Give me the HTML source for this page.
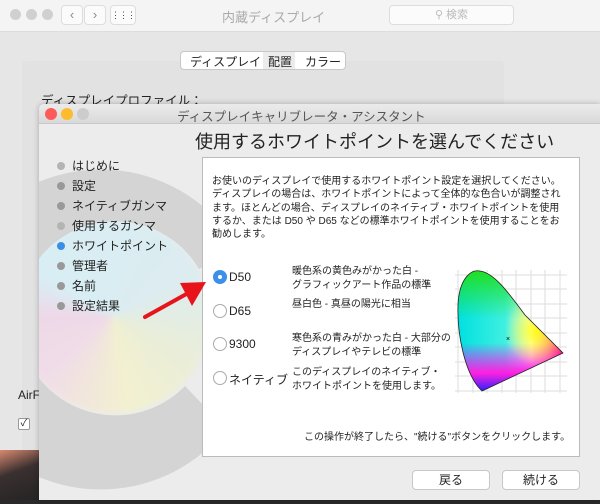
<!DOCTYPE html>
<html><head><meta charset="utf-8"><style>
*{margin:0;padding:0;box-sizing:border-box}
body{width:600px;height:504px;overflow:hidden;position:relative;background:#e6e6e6;font-family:"Liberation Sans","Noto Sans CJK JP",sans-serif;color:#222}
.abs{position:absolute}
.tb{left:0;top:0;width:600px;height:32px;background:#f4f4f4;border-bottom:1px solid #ddd}
.dot{width:11px;height:11px;border-radius:50%;background:#d0d0d0;top:9px}
.btn{background:#fbfbfb;border:1px solid #ddd;border-radius:4px}
.t{font-size:12px;white-space:nowrap}
.side div{position:relative;padding-left:15px}
.side i{position:absolute;left:0;top:6px;width:8px;height:8px;border-radius:50%;background:#999}
</style></head><body>
<div class="abs tb"></div>
<div class="abs dot" style="left:10px"></div><div class="abs dot" style="left:26px"></div><div class="abs dot" style="left:42px"></div>
<div class="abs btn" style="left:61px;top:5px;width:22px;height:20px;font-size:13px;color:#888;text-align:center;line-height:18px">&#8249;</div>
<div class="abs btn" style="left:84px;top:5px;width:22px;height:20px;font-size:13px;color:#888;text-align:center;line-height:18px">&#8250;</div>
<div class="abs btn" style="left:110px;top:5px;width:26px;height:20px;font-size:9px;color:#444;text-align:center;line-height:18px;letter-spacing:-1px">&#8942;&#8942;&#8942;</div>
<div class="abs t" style="left:222px;top:7px;font-size:13px;color:#aaa">内蔵ディスプレイ</div>
<div class="abs btn" style="left:389px;top:5px;width:125px;height:20px;font-size:11px;color:#bbb;text-align:center;line-height:18px">&#9906; 検索</div>
<div class="abs" style="left:22px;top:61px;width:482px;height:400px;background:#e2e2e2;border-radius:4px"></div>
<div class="abs" style="left:180px;top:51px;width:166px;height:19px;background:#fff;border:1px solid #c8c8c8;border-radius:4px"></div>
<div class="abs" style="left:263px;top:52px;width:32px;height:17px;background:#ececec"></div>
<div class="abs t" style="left:190px;top:53px">ディスプレイ</div>
<div class="abs t" style="left:268px;top:53px">配置</div>
<div class="abs t" style="left:305px;top:53px">カラー</div>
<div class="abs t" style="left:41px;top:90px;font-size:12.5px">ディスプレイプロファイル：</div>
<div class="abs t" style="left:18px;top:388px">AirF</div>
<div class="abs" style="left:18px;top:418px;width:12px;height:12px;border:1px solid #999;background:#fff;border-radius:2px;font-size:10px;line-height:10px;text-align:center">✓</div>
<div class="abs" style="left:0;top:450px;width:40px;height:54px;background:linear-gradient(160deg,#d98a70,#3a3030 40%,#222)"></div>
<div class="abs" style="left:0;top:500px;width:600px;height:4px;background:#2a2a2a"></div>
<!-- dialog -->
<div class="abs" style="left:39px;top:104px;width:561px;height:396px;background:#ececec;border-radius:5px 0 0 0;box-shadow:0 0 6px rgba(0,0,0,.25);overflow:hidden">
 <div class="abs" style="left:0;top:0;width:561px;height:20px;background:linear-gradient(#ebebeb,#d9d9d9);border-bottom:1px solid #c8c8c8"></div>
 <div class="abs" style="left:6px;top:4px;width:12px;height:12px;border-radius:50%;background:#fc5b57"></div>
 <div class="abs" style="left:22px;top:4px;width:12px;height:12px;border-radius:50%;background:#fdbc2e"></div>
 <div class="abs" style="left:38px;top:4px;width:12px;height:12px;border-radius:50%;background:#ccc"></div>
 <div class="abs t" style="left:138px;top:2px;font-size:12.5px;color:#555">ディスプレイキャリブレータ・アシスタント</div>
 <div class="abs" style="left:-23px;top:115px;width:194px;height:194px;border-radius:50%;background:conic-gradient(from -60deg,#d8eef4 0deg,#dcecf0 120deg,#eaeed8 180deg,#f2f0d0 230deg,#f0dce8 290deg,#eed8e8 330deg,#d8eef4 360deg);filter:blur(3px)"></div>
 <svg class="abs" style="left:0;top:0" width="561" height="396">
  <path d="M200 145 A160 160 0 1 0 187 325 L146 282 A97 97 0 1 1 160 165 Z" fill="#d2d2d2" opacity="0.9"/>
 </svg>
 <div class="abs" style="left:156px;top:24px;font-size:18px;white-space:nowrap">使用するホワイトポイントを選んでください</div>
 <div class="abs" style="left:163px;top:53px;width:378px;height:300px;background:#fff;border:1px solid #bbb"></div>
</div>
<div class="abs side" style="left:57px;top:156px;font-size:12px;line-height:20px">
 <div><i style="background:#b4b4b4"></i>はじめに</div><div><i></i>設定</div><div><i></i>ネイティブガンマ</div><div><i style="background:#b4b4b4"></i>使用するガンマ</div><div><i style="background:#3a8ee6"></i>ホワイトポイント</div><div><i></i>管理者</div><div><i></i>名前</div><div><i></i>設定結果</div>
</div>
<div class="abs" style="left:212px;top:175px;font-size:10px;line-height:13.3px;color:#222;white-space:nowrap">お使いのディスプレイで使用するホワイトポイント設定を選択してください。<br>ディスプレイの場合は、ホワイトポイントによって全体的な色合いが調整され<br>ます。ほとんどの場合、ディスプレイのネイティブ・ホワイトポイントを使用<br>するか、または D50 や D65 などの標準ホワイトポイントを使用することをお<br>勧めします。</div>
<div class="abs" style="left:213px;top:270px;width:14px;height:14px;border-radius:50%;background:#3d8fea"><div style="margin:5px;width:4px;height:4px;border-radius:50%;background:#fff"></div></div>
<div class="abs" style="left:213px;top:304px;width:14px;height:14px;border-radius:50%;border:1px solid #aaa;background:#fff"></div>
<div class="abs" style="left:213px;top:337px;width:14px;height:14px;border-radius:50%;border:1px solid #aaa;background:#fff"></div>
<div class="abs" style="left:213px;top:371px;width:14px;height:14px;border-radius:50%;border:1px solid #aaa;background:#fff"></div>
<div class="abs t" style="left:229px;top:270px">D50</div>
<div class="abs t" style="left:229px;top:304px">D65</div>
<div class="abs t" style="left:229px;top:337px">9300</div>
<div class="abs t" style="left:229px;top:371px">ネイティブ</div>
<div class="abs" style="left:292px;top:265px;font-size:10px;line-height:14px;white-space:nowrap">暖色系の黄色みがかった白 -<br>グラフィックアート作品の標準</div>
<div class="abs" style="left:292px;top:298px;font-size:10px;line-height:14px;white-space:nowrap">昼白色 - 真昼の陽光に相当</div>
<div class="abs" style="left:292px;top:332px;font-size:10px;line-height:14px;white-space:nowrap">寒色系の青みがかった白 - 大部分の<br>ディスプレイやテレビの標準</div>
<div class="abs" style="left:292px;top:366px;font-size:10px;line-height:14px;white-space:nowrap">このディスプレイのネイティブ・<br>ホワイトポイントを使用します。</div>
<svg class="abs" style="left:455px;top:265px" width="115" height="130">
 <g stroke="#ddd" stroke-width="1">
  <path d="M3 5V128M18 5V128M32 5V128M47 5V128M61 5V128M76 5V128M90 5V128M105 5V128"/>
  <path d="M0 10H112M0 24H112M0 39H112M0 53H112M0 68H112M0 82H112M0 97H112M0 111H112M0 126H112"/>
 </g>
 <defs>
  <linearGradient id="g1" x1="0" y1="0" x2="1" y2="0"><stop offset="0" stop-color="#00e0e0"/><stop offset=".45" stop-color="#40f0e0"/><stop offset=".7" stop-color="#fff"/><stop offset="1" stop-color="#ff1060"/></linearGradient>
  <linearGradient id="g2" x1="0" y1="0" x2="0" y2="1"><stop offset="0" stop-color="#20e020"/><stop offset=".4" stop-color="#20e020" stop-opacity="0"/></linearGradient>
  <linearGradient id="g3" x1="0" y1="0" x2="0" y2="1"><stop offset=".6" stop-color="#ff00ff" stop-opacity="0"/><stop offset=".85" stop-color="#ff20e0"/><stop offset="1" stop-color="#3020ff"/></linearGradient>
  <radialGradient id="g4" cx=".75" cy=".5" r=".3"><stop offset="0" stop-color="#ffff00" stop-opacity=".9"/><stop offset="1" stop-color="#ffff00" stop-opacity="0"/></radialGradient>
 </defs>
 <path d="M27 126 C10 110 2 70 3 40 C4 15 15 4 25 6 C40 8 55 30 70 50 L108 88 Z" fill="url(#g1)"/>
 <path d="M27 126 C10 110 2 70 3 40 C4 15 15 4 25 6 C40 8 55 30 70 50 L108 88 Z" fill="url(#g2)"/>
 <path d="M27 126 C10 110 2 70 3 40 C4 15 15 4 25 6 C40 8 55 30 70 50 L108 88 Z" fill="url(#g3)"/>
 <path d="M27 126 C10 110 2 70 3 40 C4 15 15 4 25 6 C40 8 55 30 70 50 L108 88 Z" fill="url(#g4)" stroke="#222" stroke-width="0.8"/>
 <text x="51" y="76" font-size="7" font-family="Liberation Sans">×</text>
</svg>
<div class="abs" style="left:304px;top:428px;font-size:10px;white-space:nowrap">この操作が終了したら、"続ける"ボタンをクリックします。</div>
<div class="abs" style="left:412px;top:470px;width:78px;height:20px;background:#fff;border:1px solid #c8c8c8;border-radius:4px;font-size:12px;text-align:center;line-height:18px">戻る</div>
<div class="abs" style="left:502px;top:470px;width:78px;height:20px;background:#fff;border:1px solid #c8c8c8;border-radius:4px;font-size:12px;text-align:center;line-height:18px">続ける</div>
<svg class="abs" style="left:0;top:0" width="600" height="504">
 <line x1="145" y1="317" x2="190" y2="292" stroke="#e8141c" stroke-width="4" stroke-linecap="round"/>
 <polygon points="206,282 180,283 192,306" fill="#e8141c"/>
</svg>
</body></html>
